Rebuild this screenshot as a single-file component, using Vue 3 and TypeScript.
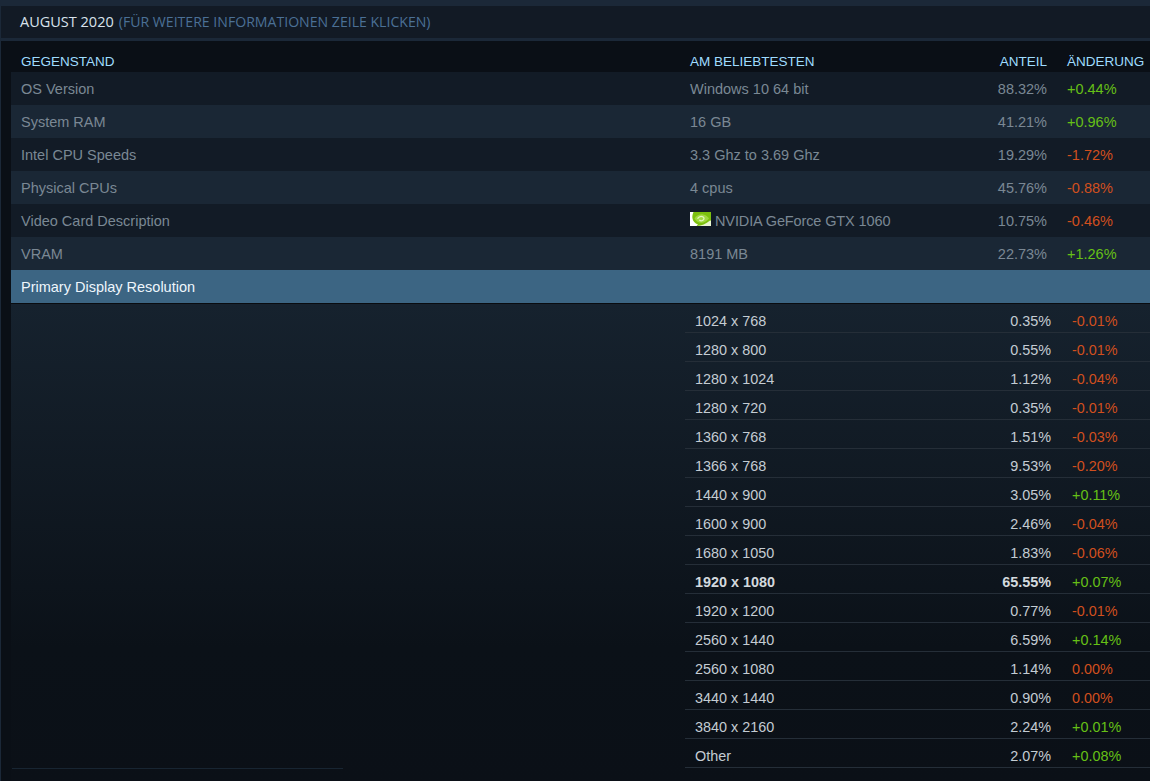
<script setup lang="ts">
interface Row { item: string; top: string; share: string; change: string; gpu?: boolean }
interface Sub { name: string; share: string; change: string; bold?: boolean }

const rows: Row[] = [
  { item: 'OS Version', top: 'Windows 10 64 bit', share: '88.32%', change: '+0.44%' },
  { item: 'System RAM', top: '16 GB', share: '41.21%', change: '+0.96%' },
  { item: 'Intel CPU Speeds', top: '3.3 Ghz to 3.69 Ghz', share: '19.29%', change: '-1.72%' },
  { item: 'Physical CPUs', top: '4 cpus', share: '45.76%', change: '-0.88%' },
  { item: 'Video Card Description', top: 'NVIDIA GeForce GTX 1060', share: '10.75%', change: '-0.46%', gpu: true },
  { item: 'VRAM', top: '8191 MB', share: '22.73%', change: '+1.26%' },
]

const subs: Sub[] = [
  { name: '1024 x 768', share: '0.35%', change: '-0.01%' },
  { name: '1280 x 800', share: '0.55%', change: '-0.01%' },
  { name: '1280 x 1024', share: '1.12%', change: '-0.04%' },
  { name: '1280 x 720', share: '0.35%', change: '-0.01%' },
  { name: '1360 x 768', share: '1.51%', change: '-0.03%' },
  { name: '1366 x 768', share: '9.53%', change: '-0.20%' },
  { name: '1440 x 900', share: '3.05%', change: '+0.11%' },
  { name: '1600 x 900', share: '2.46%', change: '-0.04%' },
  { name: '1680 x 1050', share: '1.83%', change: '-0.06%' },
  { name: '1920 x 1080', share: '65.55%', change: '+0.07%', bold: true },
  { name: '1920 x 1200', share: '0.77%', change: '-0.01%' },
  { name: '2560 x 1440', share: '6.59%', change: '+0.14%' },
  { name: '2560 x 1080', share: '1.14%', change: '0.00%' },
  { name: '3440 x 1440', share: '0.90%', change: '0.00%' },
  { name: '3840 x 2160', share: '2.24%', change: '+0.01%' },
  { name: 'Other', share: '2.07%', change: '+0.08%' },
]

const isUp = (c: string): boolean => c.startsWith('+')
</script>

<template>
  <div class="page">
    <div class="title">
      <span class="month">AUGUST 2020</span>
      <span class="hint">(FÜR WEITERE INFORMATIONEN ZEILE KLICKEN)</span>
    </div>
    <div class="panel">
      <div class="head">
        <span class="c-item">GEGENSTAND</span>
        <span class="c-top">AM BELIEBTESTEN</span>
        <span class="c-share">ANTEIL</span>
        <span class="c-change">ÄNDERUNG</span>
      </div>
      <div v-for="r in rows" :key="r.item" class="row">
        <span class="c-item">{{ r.item }}</span>
        <span class="c-top" :class="{ tight: r.gpu }">
          <svg v-if="r.gpu" class="gpu" viewBox="0 0 21 14" width="21" height="14" aria-hidden="true">
            <rect width="21" height="14" fill="#7cc00e" />
            <path d="M0 0h3.500C2.600 2 2.200 4 2.400 6c.3 3 2.600 5.400 5.600 6.600L6.500 14H0z" fill="#fff" />
            <path d="M7 14c4.500-.3 9-2 13-5.600l1 .4V14z" fill="#e9f5d2" />
            <path d="M4.500 6.400C6.500 3.400 10 2 13 2.400c2.800.4 4.800 2.200 6 4-1.800 2.200-4 4-7 4.400-3 .3-5.800-1.700-7.500-4.400z" fill="#9fd93f" />
            <path d="M7.500 6.600c1.500-2 3.800-2.600 5.400-1.800 1.500.8 1.400 2.600 0 3.500-1.400.9-3 .5-3.400-.6" fill="none" stroke="#e4f5bf" stroke-width="1.300" />
          </svg>
          {{ r.top }}
        </span>
        <span class="c-share">{{ r.share }}</span>
        <span class="c-change" :class="isUp(r.change) ? 'up' : 'down'">{{ r.change }}</span>
      </div>
      <div class="row selected">
        <span class="c-item">Primary Display Resolution</span>
      </div>
      <div class="detail">
        <div class="side"><div class="side-rule"></div></div>
        <div class="list">
          <div v-for="s in subs" :key="s.name" class="sub" :class="{ bold: s.bold }">
            <span class="s-name">{{ s.name }}</span>
            <span class="s-share">{{ s.share }}</span>
            <span class="s-change" :class="isUp(s.change) ? 'up' : 'down'">{{ s.change }}</span>
          </div>
        </div>
      </div>
    </div>
  </div>
</template>

<style>
html, body { margin: 0; background: #0b1118; overflow: hidden; }
</style>

<style scoped>
.page {
  width: 1150px;
  height: 781px;
  box-sizing: border-box;
  padding-top: 6px;
  background: #1b2838;
  font-family: "Liberation Sans", Arial, sans-serif;
  overflow: hidden;
}
.title {
  height: 32px;
  box-sizing: border-box;
  margin-left: 1px;
  padding: 7px 0 0 19px;
  background: #121a25;
  font-family: "Open Sans", sans-serif;
  font-size: 14.1px;
  line-height: 18px;
  white-space: pre;
}
.month { color: #d8e2ec; font-size: 14.5px; }
.hint { color: #4b7096; margin-left: 5px; }
.panel {
  margin: 3px 0 0 1px;
  height: 740px;
  box-sizing: border-box;
  background: #0a0f16;
  padding-left: 10px;
}
.head, .row {
  display: flex;
  align-items: center;
  font-size: 14.5px;
}
.head {
  height: 31px;
  margin-left: -10px;
  padding: 9px 0 0 10px;
  box-sizing: border-box;
  color: #9fdcff;
  font-size: 13.5px;
}
.row {
  height: 33px;
  background: #121b26;
  color: #7a8894;
}
.row:nth-child(odd) { background: #1a2735; }
.c-item { width: 678px; padding-left: 10px; box-sizing: border-box; flex: none; white-space: nowrap; }
.c-top { width: 276px; padding-left: 1px; box-sizing: border-box; flex: none; display: flex; align-items: center; gap: 4px; white-space: nowrap; }
.c-top.tight { letter-spacing: -0.12px; }
.c-share { width: 82px; flex: none; text-align: right; box-sizing: border-box; }
.c-change { flex: none; margin-left: 20px; white-space: nowrap; }
.gpu { margin-top: -4px; }
.row.selected {
  background: #3c6583;
  color: #eef6fc;
  border-bottom: 1px solid #0a0c10;
  height: 34px;
  box-sizing: border-box;
}
.up { color: #66c016; }
.down { color: #d14f1e; }
.detail {
  height: 478px;
  display: flex;
  background: linear-gradient(to bottom, #16222e 0%, #0b1118 72%, #0b1017 100%);
}
.side { width: 674px; flex: none; position: relative; }
.side-rule {
  height: 1px;
  width: 331px;
  margin-top: 464px;
  margin-left: 1px;
  background: #182532;
}
.list { flex: 1; }
.sub {
  display: flex;
  align-items: center;
  height: 29px;
  box-sizing: border-box;
  border-bottom: 1px solid #252e38;
  font-size: 14.4px;
  color: #c4ccd3;
  padding-top: 5px;
}
.sub.bold { font-weight: 700; color: #d3d9de; }
.s-name { width: 300px; padding-left: 10px; box-sizing: border-box; flex: none; }
.s-share { width: 66px; flex: none; text-align: right; }
.s-change { flex: none; margin-left: 21px; font-weight: 400; }
</style>
